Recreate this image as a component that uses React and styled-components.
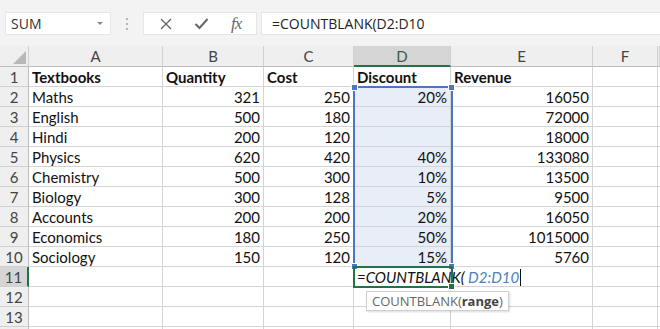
import React from 'react'
import styled, { createGlobalStyle } from 'styled-components'

const GlobalStyle = createGlobalStyle`
  body {
    margin: 0;
    background: #fff;
    font-family: Lato, "Open Sans", sans-serif;
  }
`

const COLS = '29px 134px 101px 90px 97px 142px 65px 1fr'

const Window = styled.div`
  width: 660px;
  height: 329px;
  overflow: hidden;
  background: #fff;
`

const Toolbar = styled.div`
  height: 46px;
  box-sizing: border-box;
  background: #f3f3f3;
  display: flex;
  align-items: flex-start;
  padding: 12px 0 0 5px;
`

const NameBox = styled.div`
  width: 106px;
  height: 23px;
  box-sizing: border-box;
  background: #fff;
  border: 1px solid #e6e6e6;
  display: flex;
  align-items: center;
  justify-content: space-between;
  padding: 0 7px 0 5px;
  font-family: "Open Sans", sans-serif;
  font-size: 14px;
  color: #333;
`

const Caret = styled.span`
  width: 0;
  height: 0;
  border-left: 3px solid transparent;
  border-right: 3px solid transparent;
  border-top: 3px solid #888;
`

const Dots = styled.div`
  width: 32px;
  height: 23px;
  display: flex;
  flex-direction: column;
  align-items: center;
  justify-content: center;
  gap: 3px;
  span {
    width: 2px;
    height: 2px;
    background: #b5b5b5;
  }
`

const FxBox = styled.div`
  width: 114px;
  height: 23px;
  box-sizing: border-box;
  background: #fff;
  border: 1px solid #e6e6e6;
  display: flex;
  align-items: center;
  justify-content: space-around;
  padding: 0 4px;
`

const FxLabel = styled.span`
  font-family: "Liberation Serif", serif;
  font-style: italic;
  font-size: 17px;
  color: #666;
  letter-spacing: -1px;
`

const FormulaInput = styled.div`
  flex: 1;
  height: 23px;
  margin-left: 4px;
  box-sizing: border-box;
  background: #fff;
  border: 1px solid #e6e6e6;
  border-right: none;
  display: flex;
  align-items: center;
  padding-left: 10px;
  font-family: "Open Sans", sans-serif;
  font-size: 14px;
  color: #222;
`

const Grid = styled.div`
  position: relative;
`

const Row = styled.div`
  display: grid;
  grid-template-columns: ${COLS};
  height: ${p => (p.$header ? 21 : 20)}px;
`

const HeadCell = styled.div`
  box-sizing: border-box;
  background: ${p => (p.$active ? '#d5d5d5' : '#efefef')};
  border-right: 1px solid #d0d0d0;
  border-bottom: ${p => (p.$active ? '2px solid #217346' : '1px solid #bdbdbd')};
  display: flex;
  align-items: center;
  justify-content: center;
  font-size: 15px;
  color: ${p => (p.$active ? '#3c5a48' : '#444')};
`

const Corner = styled(HeadCell)`
  position: relative;
  svg {
    position: absolute;
    right: 2px;
    bottom: 2px;
  }
`

const RowNum = styled.div`
  box-sizing: border-box;
  background: ${p => (p.$active ? '#d5d5d5' : '#efefef')};
  border-right: ${p => (p.$active ? '2px solid #217346' : '1px solid #bdbdbd')};
  border-bottom: 1px solid #d0d0d0;
  display: flex;
  align-items: center;
  justify-content: center;
  font-size: 15px;
  color: #444;
`

const Cell = styled.div`
  box-sizing: border-box;
  background: ${p => (p.$sel ? '#e8eef8' : '#fff')};
  border-right: 1px solid #d4d4d4;
  border-bottom: 1px solid #d4d4d4;
  display: flex;
  align-items: center;
  justify-content: ${p => (p.$num ? 'flex-end' : 'flex-start')};
  padding: 0 3px;
  font-size: 15px;
  font-weight: ${p => (p.$bold ? 700 : 400)};
  color: #111;
  white-space: nowrap;
`

const Editor = styled.span`
  position: relative;
  z-index: 2;
  font-style: italic;
  font-size: 15px;
  color: #111;
  em {
    color: #4a7fc1;
  }
  i {
    display: inline-block;
    width: 1px;
    height: 17px;
    background: #111;
    vertical-align: -3px;
    margin-left: 1px;
  }
`

const Frame = styled.div`
  position: absolute;
  left: ${p => p.$x}px;
  top: ${p => p.$y}px;
  width: ${p => p.$w}px;
  height: ${p => p.$h}px;
  box-sizing: border-box;
  border: 2px solid ${p => p.$color};
  pointer-events: none;
  z-index: 3;
`

const Handle = styled.span`
  position: absolute;
  width: 5px;
  height: 5px;
  background: ${p => p.$color};
  border: 1px solid #fff;
  ${p => (p.$top ? 'top: -4px;' : 'bottom: -4px;')}
  ${p => (p.$left ? 'left: -4px;' : 'right: -4px;')}
`

const Tooltip = styled.div`
  position: absolute;
  left: 366px;
  top: 224px;
  height: 20px;
  box-sizing: border-box;
  padding: 0 5px;
  background: #fff;
  border: 1px solid #cfcfcf;
  box-shadow: 1px 1px 2px rgba(0, 0, 0, 0.15);
  display: flex;
  align-items: center;
  font-family: "Open Sans", sans-serif;
  font-size: 13px;
  color: #666;
  z-index: 4;
  b {
    color: #444;
  }
`

const columns = ['A', 'B', 'C', 'D', 'E', 'F']

const data = [
  ['Textbooks', 'Quantity', 'Cost', 'Discount', 'Revenue'],
  ['Maths', '321', '250', '20%', '16050'],
  ['English', '500', '180', '', '72000'],
  ['Hindi', '200', '120', '', '18000'],
  ['Physics', '620', '420', '40%', '133080'],
  ['Chemistry', '500', '300', '10%', '13500'],
  ['Biology', '300', '128', '5%', '9500'],
  ['Accounts', '200', '200', '20%', '16050'],
  ['Economics', '180', '250', '50%', '1015000'],
  ['Sociology', '150', '120', '15%', '5760'],
  ['', '', '', '', ''],
  ['', '', '', '', ''],
  ['', '', '', '', ''],
  ['', '', '', '', ''],
]

const CrossIcon = () => (
  <svg width="14" height="14" viewBox="0 0 14 14">
    <path d="M2 2 L12 12 M12 2 L2 12" stroke="#666" strokeWidth="1.3" fill="none" />
  </svg>
)

const CheckIcon = () => (
  <svg width="15" height="13" viewBox="0 0 15 13">
    <path d="M1.5 7 L5.5 11 L13.5 2" stroke="#666" strokeWidth="2" fill="none" />
  </svg>
)

export default function App() {
  return (
    <Window>
      <GlobalStyle />
      <Toolbar>
        <NameBox>
          SUM
          <Caret />
        </NameBox>
        <Dots>
          <span />
          <span />
          <span />
        </Dots>
        <FxBox>
          <CrossIcon />
          <CheckIcon />
          <FxLabel>fx</FxLabel>
        </FxBox>
        <FormulaInput>=COUNTBLANK(D2:D10</FormulaInput>
      </Toolbar>

      <Row $header>
        <Corner>
          <svg width="13" height="13" viewBox="0 0 13 13">
            <path d="M13 0 L13 13 L0 13 Z" fill="#b8b8b8" />
          </svg>
        </Corner>
        {columns.map(c => (
          <HeadCell key={c} $active={c === 'D'}>{c}</HeadCell>
        ))}
        <HeadCell />
      </Row>

      <Grid>
        {data.map((row, r) => {
          const n = r + 1
          return (
            <Row key={n}>
              <RowNum $active={n === 11}>{n <= 13 ? n : ''}</RowNum>
              {row.map((v, c) => (
                <Cell
                  key={c}
                  $bold={n === 1}
                  $num={n > 1 && c > 0 && v !== ''}
                  $sel={c === 3 && n >= 2 && n <= 10}
                >
                  {n === 11 && c === 3 ? (
                    <Editor>
                      =COUNTBLANK( <em>D2:D10</em>
                      <i />
                    </Editor>
                  ) : (
                    v
                  )}
                </Cell>
              ))}
              <Cell />
              <Cell />
            </Row>
          )
        })}

        <Frame $x={353} $y={19} $w={100} $h={182} $color="#4a76c4">
          <Handle $color="#4a76c4" $top $left />
          <Handle $color="#4a76c4" $top />
          <Handle $color="#4a76c4" $left />
          <Handle $color="#4a76c4" />
        </Frame>
        <Frame $x={353} $y={199} $w={100} $h={22} $color="#217346">
          <Handle $color="#217346" />
        </Frame>
        <Tooltip>
          COUNTBLANK(<b>range</b>)
        </Tooltip>
      </Grid>
    </Window>
  )
}
